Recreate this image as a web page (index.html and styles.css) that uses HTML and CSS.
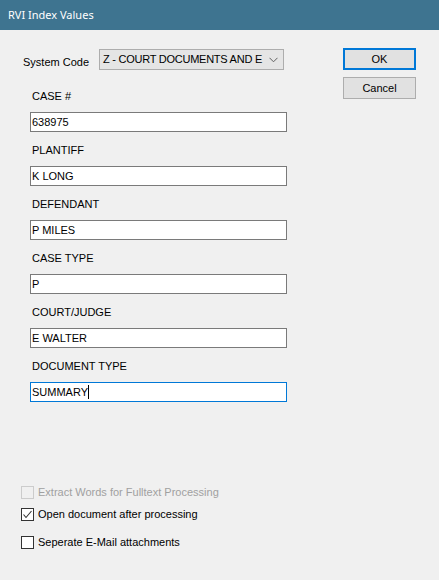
FILE: index.html
```html
<!DOCTYPE html>
<html>
<head>
<meta charset="utf-8">
<title>RVI Index Values</title>
<link rel="stylesheet" href="styles.css">
</head>
<body>
<div class="window">
  <div class="titlebar">RVI Index Values</div>
  <div class="content">
    <div class="form">
      <div class="system-row">
        <span class="system-label">System Code</span>
        <div class="combo">
          <span class="combo-text">Z - COURT DOCUMENTS AND E</span>
          <svg class="chev" width="9" height="6" viewBox="0 0 9 6"><polyline points="0.5,0.8 4.5,4.8 8.5,0.8" fill="none" stroke="#606060" stroke-width="1"/></svg>
        </div>
      </div>
      <div class="fields">
        <div class="field">
          <div class="label">CASE #</div>
          <div class="textbox">638975</div>
        </div>
        <div class="field">
          <div class="label">PLANTIFF</div>
          <div class="textbox">K LONG</div>
        </div>
        <div class="field">
          <div class="label">DEFENDANT</div>
          <div class="textbox">P MILES</div>
        </div>
        <div class="field">
          <div class="label">CASE TYPE</div>
          <div class="textbox">P</div>
        </div>
        <div class="field">
          <div class="label">COURT/JUDGE</div>
          <div class="textbox">E WALTER</div>
        </div>
        <div class="field">
          <div class="label">DOCUMENT TYPE</div>
          <div class="textbox focused">SUMMARY<span class="caret"></span></div>
        </div>
      </div>
    </div>
    <div class="buttons">
      <div class="btn default">OK</div>
      <div class="btn">Cancel</div>
    </div>
  </div>
  <div class="options">
    <div class="check disabled"><span class="box"></span><span>Extract Words for Fulltext Processing</span></div>
    <div class="check checked"><span class="box"><svg width="11" height="11" viewBox="0 0 11 11"><polyline points="1.5,5.5 4,8.5 9.5,2" fill="none" stroke="#333" stroke-width="1.1"/></svg></span><span>Open document after processing</span></div>
    <div class="check third"><span class="box"></span><span>Seperate E-Mail attachments</span></div>
  </div>
</div>
</body>
</html>
```
FILE: styles.css
```css
html, body {
  margin: 0;
  padding: 0;
}
body {
  background: #f0f0f0;
  font-family: "Liberation Sans", Arial, sans-serif;
  font-size: 11px;
  color: #000;
}
.window {
  width: 439px;
  height: 580px;
  background: #f0f0f0;
  overflow: hidden;
}
.titlebar {
  height: 30px;
  background: #3e7490;
  color: #ffffff;
  font-family: "Noto Sans", "Open Sans", sans-serif;
  font-size: 11px;
  line-height: 30px;
  padding-left: 8px;
}
.content {
  display: flex;
  padding-top: 18px;
}
.form {
  margin-left: 23px;
  width: 264px;
}
.system-row {
  display: flex;
  align-items: flex-end;
  margin-top: 1px;
}
.system-label {
  width: 76px;
  line-height: 13px;
  padding-bottom: 1px;
}
.combo {
  width: 180px;
  height: 19px;
  border: 1px solid #adadad;
  background: #e5e5e5;
  display: flex;
  align-items: center;
  padding-left: 3px;
  box-sizing: content-box;
}
.combo-text {
  flex: 1;
  line-height: 13px;
  white-space: nowrap;
  letter-spacing: -0.25px;
}
.chev {
  flex: none;
  margin-right: 5px;
  margin-left: 2px;
}
.fields {
  margin-left: 7px;
  margin-top: 20px;
}
.field {
  margin-bottom: 12px;
}
.label {
  line-height: 13px;
  margin-left: 2px;
  margin-bottom: 9px;
}
.textbox {
  width: 254px;
  height: 18px;
  border: 1px solid #7a7a7a;
  background: #ffffff;
  line-height: 18px;
  padding-left: 1px;
  white-space: nowrap;
}
.textbox.focused {
  border-color: #0078d7;
}
.caret {
  display: inline-block;
  width: 1px;
  height: 14px;
  background: #000;
  vertical-align: -3px;
}
.buttons {
  margin-left: auto;
  margin-right: 23px;
  display: flex;
  flex-direction: column;
  gap: 7px;
}
.btn {
  width: 73px;
  height: 22px;
  box-sizing: border-box;
  border: 1px solid #adadad;
  background: #e1e1e1;
  display: flex;
  align-items: center;
  justify-content: center;
  line-height: 13px;
}
.btn.default {
  border: 2px solid #0078d7;
}
.options {
  margin-top: 72px;
  padding-left: 21px;
}
.check {
  display: flex;
  align-items: center;
  gap: 4px;
  height: 13px;
  line-height: 13px;
  margin-bottom: 9px;
}
.check.third {
  margin-top: 15px;
}
.box {
  width: 13px;
  height: 13px;
  box-sizing: border-box;
  border: 1px solid #333333;
  background: #ffffff;
  display: flex;
  align-items: center;
  justify-content: center;
}
.check.disabled {
  color: #a0a0a0;
}
.check.disabled .box {
  border-color: #cccccc;
  background: #f0f0f0;
}
```
